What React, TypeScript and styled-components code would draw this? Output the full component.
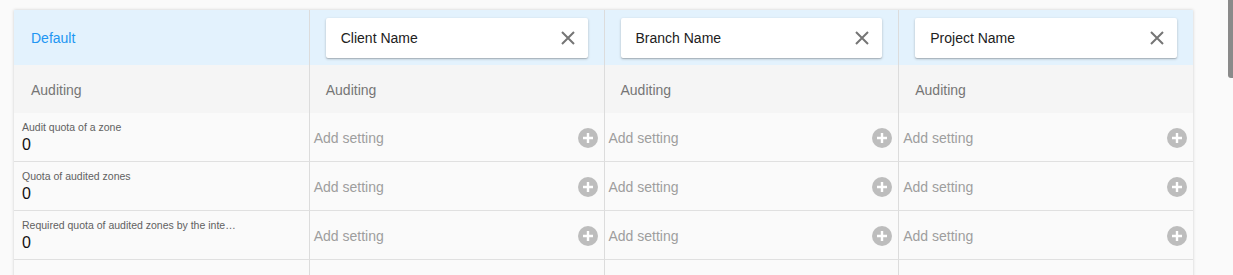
import React from 'react';
import styled, { createGlobalStyle } from 'styled-components';

const GlobalStyle = createGlobalStyle`
  html, body {
    margin: 0;
    padding: 0;
    background: #fafafa;
    font-family: "Liberation Sans", Arial, sans-serif;
    overflow: hidden;
  }
`;

const scopes = ['Client Name', 'Branch Name', 'Project Name'];

const settings = [
  { label: 'Audit quota of a zone', value: '0' },
  { label: 'Quota of audited zones', value: '0' },
  { label: 'Required quota of audited zones by the inte…', value: '0' },
];

const CloseIcon = () => (
  <svg width="14" height="14" viewBox="0 0 14 14">
    <path d="M1 1 L13 13 M13 1 L1 13" stroke="#757575" strokeWidth="2" fill="none" />
  </svg>
);

const PlusIcon = () => (
  <svg width="20" height="20" viewBox="0 0 20 20">
    <circle cx="10" cy="10" r="10" fill="#bdbdbd" />
    <path d="M10 5 V15 M5 10 H15" stroke="#fff" strokeWidth="2.4" />
  </svg>
);

const App = () => {
  return (
    <Page>
      <GlobalStyle />
      <Table>
        <HeaderCell>
          <DefaultLabel>Default</DefaultLabel>
        </HeaderCell>
        {scopes.map((scope) => (
          <HeaderCell key={scope} bordered>
            <ScopeCard>
              <span>{scope}</span>
              <ClearButton>
                <CloseIcon />
              </ClearButton>
            </ScopeCard>
          </HeaderCell>
        ))}

        {[0, 1, 2, 3].map((i) => (
          <GroupCell key={i} bordered={i > 0}>
            Auditing
          </GroupCell>
        ))}

        {settings.map((setting) => (
          <React.Fragment key={setting.label}>
            <ValueCell>
              <SettingLabel>{setting.label}</SettingLabel>
              <SettingValue>{setting.value}</SettingValue>
            </ValueCell>
            {scopes.map((scope) => (
              <AddCell key={scope}>
                <AddText>Add setting</AddText>
                <PlusIcon />
              </AddCell>
            ))}
          </React.Fragment>
        ))}

        {[0, 1, 2, 3].map((i) => (
          <EmptyCell key={i} bordered={i > 0} />
        ))}
      </Table>
      <ScrollThumb />
    </Page>
  );
};

const Page = styled.div`
  position: relative;
  width: 1233px;
  height: 275px;
  padding: 10px 0 0 14px;
  box-sizing: border-box;
`;

const Table = styled.div`
  width: 1179px;
  display: grid;
  grid-template-columns: repeat(4, 1fr);
  background: #fafafa;
  box-shadow: 0 0 3px rgba(0, 0, 0, 0.18);
`;

const HeaderCell = styled.div<{ bordered?: boolean }>`
  height: 55px;
  background: #e3f2fd;
  display: flex;
  align-items: center;
  padding: 0 16px;
  border-left: ${(p) => (p.bordered ? '1px solid #dcdcdc' : 'none')};
`;

const DefaultLabel = styled.span`
  font-size: 14px;
  color: #2196f3;
  padding-left: 1px;
`;

const ScopeCard = styled.div`
  flex: 1;
  height: 40px;
  margin-top: 1px;
  background: #fff;
  display: flex;
  align-items: center;
  justify-content: space-between;
  padding: 0 13px 0 15px;
  font-size: 14px;
  color: #212121;
  box-shadow: 0 1px 3px rgba(0, 0, 0, 0.2), 0 1px 1px rgba(0, 0, 0, 0.14);
  border-radius: 2px;
`;

const ClearButton = styled.span`
  display: flex;
  align-items: center;
`;

const GroupCell = styled.div<{ bordered?: boolean }>`
  height: 48px;
  background: #f5f5f5;
  display: flex;
  align-items: center;
  padding: 2px 16px 0 ${(p) => (p.bordered ? '16px' : '17px')};
  box-sizing: border-box;
  font-size: 14px;
  color: #757575;
  border-left: ${(p) => (p.bordered ? '1px solid #dcdcdc' : 'none')};
`;

const ValueCell = styled.div`
  border-bottom: 1px solid #e0e0e0;
  padding: 8px 8px 0 8px;
  box-sizing: border-box;
  height: 49px;
  min-width: 0;
`;

const SettingLabel = styled.div`
  font-size: 10.5px;
  color: #616161;
  line-height: 13px;
  white-space: nowrap;
`;

const SettingValue = styled.div`
  font-size: 16px;
  color: #111;
  line-height: 20px;
  margin-top: 1px;
`;

const AddCell = styled.div`
  height: 49px;
  box-sizing: border-box;
  border-bottom: 1px solid #e0e0e0;
  border-left: 1px solid #dcdcdc;
  display: flex;
  align-items: center;
  justify-content: space-between;
  padding: 1px 6px 0 4px;
`;

const AddText = styled.span`
  font-size: 14px;
  color: #9e9e9e;
`;

const EmptyCell = styled.div<{ bordered?: boolean }>`
  height: 20px;
  border-left: ${(p) => (p.bordered ? '1px solid #dcdcdc' : 'none')};
`;

const ScrollThumb = styled.div`
  position: absolute;
  top: 0;
  right: 0;
  width: 5px;
  height: 78px;
  background: #8a8a8a;
  border-bottom-left-radius: 3px;
`;

export default App;
